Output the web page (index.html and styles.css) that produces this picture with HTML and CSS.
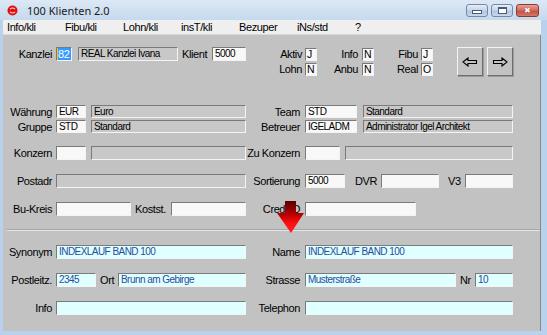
FILE: index.html
```html
<!DOCTYPE html>
<html lang="de">
<head>
    <meta charset="UTF-8">
    <title>100 Klienten 2.0</title>
    <link rel="stylesheet" href="styles.css">
</head>
<body>
<div class="window">
    <!-- Title bar -->
    <div class="titlebar">
        <svg class="app-icon" width="11" height="11" viewBox="0 0 11 11">
            <circle cx="5.5" cy="5.5" r="5" fill="#e01010"/>
            <path d="M3 4 Q5.5 2 8 4 M3 7 Q5.5 9 8 7" stroke="#ffd0d0" stroke-width="1.2" fill="none"/>
        </svg>
        <span class="title">100 Klienten 2.0</span>
        <div class="win-buttons">
            <span class="wbtn"><span class="g-min"></span></span>
            <span class="wbtn"><span class="g-max"></span></span>
            <span class="wbtn close"><span class="g-close">&#x2716;</span></span>
        </div>
    </div>

    <div class="frame">
        <!-- Menu -->
        <nav class="menubar">
            <span>Info/kli</span>
            <span>Fibu/kli</span>
            <span>Lohn/kli</span>
            <span>insT/kli</span>
            <span>Bezuper</span>
            <span>iNs/std</span>
            <span>?</span>
        </nav>

        <div class="client">
            <!-- Upper form -->
            <section class="upper">
                <div class="row row-top">
                    <span class="lab">Kanzlei</span>
                    <span class="fld sel w16"><span class="hl">82</span></span>
                    <span class="fld ro w100 ml6">REAL Kanzlei Ivana</span>
                    <span class="ilab ml4 w26">Klient</span>
                    <span class="fld w34 ml4">5000</span>

                    <div class="flags g1">
                        <div class="flag"><span class="flab">Aktiv</span><span class="fld sm">J</span></div>
                        <div class="flag"><span class="flab">Lohn</span><span class="fld sm">N</span></div>
                    </div>
                    <div class="flags g2">
                        <div class="flag"><span class="flab">Info</span><span class="fld sm">N</span></div>
                        <div class="flag"><span class="flab">Anbu</span><span class="fld sm">N</span></div>
                    </div>
                    <div class="flags g3">
                        <div class="flag"><span class="flab">Fibu</span><span class="fld sm">J</span></div>
                        <div class="flag"><span class="flab">Real</span><span class="fld sm">O</span></div>
                    </div>

                    <button class="nav-btn first">
                        <svg width="16" height="10" viewBox="0 0 16 10"><path d="M1 5 L6 1 L6 3.5 L14.5 3.5 L14.5 6.5 L6 6.5 L6 9 Z" fill="none" stroke="#000" stroke-width="1.1"/></svg>
                    </button>
                    <button class="nav-btn">
                        <svg width="16" height="10" viewBox="0 0 16 10"><path d="M15 5 L10 1 L10 3.5 L1.5 3.5 L1.5 6.5 L10 6.5 L10 9 Z" fill="none" stroke="#000" stroke-width="1.1"/></svg>
                    </button>
                </div>

                <div class="row row-pair">
                    <div class="half">
                        <div class="sub">
                            <span class="lab">Währung</span>
                            <span class="fld w30 h13">EUR</span>
                            <span class="fld ro w155 h13 ml5">Euro</span>
                        </div>
                        <div class="sub">
                            <span class="lab">Gruppe</span>
                            <span class="fld w30 h13">STD</span>
                            <span class="fld ro w155 h13 ml5">Standard</span>
                        </div>
                    </div>
                    <div class="half-r">
                        <div class="sub">
                            <span class="rlab">Team</span>
                            <span class="fld w52 h13">STD</span>
                            <span class="fld ro w150 h13 ml6">Standard</span>
                        </div>
                        <div class="sub">
                            <span class="rlab">Betreuer</span>
                            <span class="fld w52 h13">IGELADM</span>
                            <span class="fld ro w150 h13 ml6">Administrator Igel Architekt</span>
                        </div>
                    </div>
                </div>

                <div class="row">
                    <div class="half">
                        <span class="lab">Konzern</span>
                        <span class="fld w30"></span>
                        <span class="fld ro w155 ml5"></span>
                    </div>
                    <div class="half-r">
                        <span class="rlab">Zu Konzern</span>
                        <span class="fld w35"></span>
                        <span class="fld ro w168 ml5"></span>
                    </div>
                </div>

                <div class="row">
                    <div class="half">
                        <span class="lab">Postadr</span>
                        <span class="fld ro w190"></span>
                    </div>
                    <div class="half-r">
                        <span class="rlab">Sortierung</span>
                        <span class="fld w40">5000</span>
                        <span class="ilab ml10 w22">DVR</span>
                        <span class="fld w58 ml4"></span>
                        <span class="ilab ml9 w14">V3</span>
                        <span class="fld w48 ml3"></span>
                    </div>
                </div>

                <div class="row">
                    <div class="half">
                        <span class="lab">Bu-Kreis</span>
                        <span class="fld w75"></span>
                        <span class="ilab ml4 w32">Kostst.</span>
                        <span class="fld w75 ml4"></span>
                    </div>
                    <div class="half-r">
                        <span class="rlab">CreditID</span>
                        <span class="fld w111"></span>
                    </div>
                </div>
            </section>

            <div class="separator"></div>

            <!-- Lower form -->
            <section class="lower">
                <div class="row">
                    <div class="half">
                        <span class="lab">Synonym</span>
                        <span class="fld cy w190">INDEXLAUF BAND 100</span>
                    </div>
                    <div class="half-r">
                        <span class="rlab">Name</span>
                        <span class="fld cy w208">INDEXLAUF BAND 100</span>
                    </div>
                </div>
                <div class="row">
                    <div class="half">
                        <span class="lab">Postleitz.</span>
                        <span class="fld cy w40">2345</span>
                        <span class="ilab ml4 w15">Ort</span>
                        <span class="fld cy w128 ml3">Brunn am Gebirge</span>
                    </div>
                    <div class="half-r">
                        <span class="rlab">Strasse</span>
                        <span class="fld cy w151">Musterstraße</span>
                        <span class="ilab ml4 w12">Nr</span>
                        <span class="fld cy w38 ml3">10</span>
                    </div>
                </div>
                <div class="row">
                    <div class="half">
                        <span class="lab">Info</span>
                        <span class="fld cy w190"></span>
                    </div>
                    <div class="half-r">
                        <span class="rlab">Telephon</span>
                        <span class="fld cy w208"></span>
                    </div>
                </div>
            </section>

            <!-- Red pointer arrow lying over the form -->
            <svg class="red-arrow" width="28" height="33" viewBox="0 0 28 33">
                <defs>
                    <linearGradient id="ra" x1="0" y1="0" x2="0" y2="1">
                        <stop offset="0" stop-color="#5a0000"/>
                        <stop offset="0.45" stop-color="#c00000"/>
                        <stop offset="0.7" stop-color="#ff1010"/>
                        <stop offset="1" stop-color="#ff2020"/>
                    </linearGradient>
                </defs>
                <path d="M8 0 L19 0 L19 12 L27 12 L14 32 L0 12 L8 12 Z" fill="url(#ra)"/>
            </svg>
        </div>
    </div>
</div>
</body>
</html>
```

FILE: styles.css
```css
/* General */
body {
    margin: 0;
    padding: 0;
    font-family: "Liberation Sans", Arial, sans-serif;
    font-size: 11px;
    letter-spacing: -0.4px;
    color: #000;
}

.window {
    width: 547px;
    height: 335px;
    display: flex;
    flex-direction: column;
    background: #b8d1ec;
    overflow: hidden;
}

/* Title bar */
.titlebar {
    height: 20px;
    display: flex;
    align-items: center;
    background: linear-gradient(#dce8f5, #c6d9ee);
    position: relative;
}

.app-icon {
    margin-left: 7px;
}

.title {
    margin-left: 9px;
    font-family: "Noto Sans", "Liberation Sans", sans-serif;
    font-size: 11px;
    letter-spacing: 0;
    color: #1a1a1a;
}

.win-buttons {
    margin-left: auto;
    margin-right: 8px;
    display: flex;
    gap: 3px;
    align-self: flex-start;
    margin-top: 4px;
}

.wbtn {
    width: 22px;
    height: 13px;
    box-sizing: border-box;
    border: 1px solid #7489a8;
    border-radius: 3px;
    background: linear-gradient(#e6eef8, #c3d3e8 50%, #aec2de 51%, #c9d8ec);
    display: flex;
    align-items: center;
    justify-content: center;
}

.wbtn.close {
    width: 23px;
    border-color: #8a3a33;
    background: linear-gradient(#e8a196, #d0685a 50%, #c24a3b 51%, #d57a6b);
}

.g-min {
    width: 8px;
    height: 2px;
    margin-top: 3px;
    background: #fff;
    border: 1px solid #4a5a78;
}

.g-max {
    width: 7px;
    height: 4px;
    border: 1px solid #4a5a78;
    border-top-width: 2px;
    background: #fff;
}

.g-close {
    color: #fff;
    font-size: 8px;
    line-height: 8px;
    text-shadow: 0 0 1px #6a2018;
}

/* Frame around the client area */
.frame {
    flex: 1;
    display: flex;
    flex-direction: column;
    padding: 0 6px 4px 3px;
}

.menubar {
    height: 15px;
    display: flex;
    align-items: center;
    padding-left: 4px;
    background: #efefef;
    border-bottom: 1px solid #d8d8d8;
    box-sizing: border-box;
}

.menubar span {
    width: 58px;
}

.client {
    flex: 1;
    position: relative;
    background: #c2c2c2;
    border-right: 1px solid #8a8a8a;
    display: flex;
    flex-direction: column;
}

/* Rows */
.row {
    display: flex;
    align-items: flex-start;
    height: 14px;
    margin-top: 14px;
}

.upper .row-top {
    margin-top: 12px;
    height: 29px;
}

.upper .row-pair {
    margin-top: 29px;
    height: 27px;
}

.half {
    width: 244px;
    display: flex;
    flex-direction: row;
}

.half-r {
    display: flex;
}

.row-pair .half,
.row-pair .half-r {
    flex-direction: column;
    gap: 1px;
}

.sub {
    display: flex;
}

.lab {
    width: 49px;
    margin-right: 4px;
    text-align: right;
    line-height: 14px;
    white-space: nowrap;
}

.rlab {
    width: 53px;
    margin-right: 5px;
    text-align: right;
    line-height: 14px;
    white-space: nowrap;
}

.ilab {
    line-height: 14px;
    white-space: nowrap;
}

/* Fields */
.fld {
    height: 14px;
    box-sizing: border-box;
    border: 1px solid;
    border-color: #7a7a7a #f4f4f4 #f4f4f4 #7a7a7a;
    background: #f8f8f8;
    padding-left: 2px;
    font-size: 10px;
    letter-spacing: -0.55px;
    line-height: 12px;
    white-space: nowrap;
    overflow: hidden;
    display: block;
}

.fld.ro {
    background: #c8c8c8;
}

.fld.cy {
    background: #e0ffff;
    color: #2a4c9c;
}

.fld.sel {
    background: #ffc21a;
    padding-left: 1px;
    font-size: 11px;
    letter-spacing: -0.3px;
}

.fld.sel .hl {
    display: inline-block;
    background: #3399ff;
    color: #fff;
    padding-right: 1px;
}

.fld.sm {
    width: 12px;
    height: 13px;
    padding-left: 1px;
    line-height: 11px;
    font-size: 10.5px;
}

.h13 { height: 13px; line-height: 11px; }

/* Flag groups in top row */
.flags {
    display: flex;
    flex-direction: column;
    gap: 2px;
    margin-top: 1px;
}

.flag {
    display: flex;
}

.flab {
    text-align: right;
    line-height: 13px;
}

.g1 { margin-left: 24px; }
.g1 .flab { width: 32px; margin-right: 3px; }
.g2 .flab { width: 41px; margin-right: 4px; }
.g3 .flab { width: 44px; margin-right: 3px; }

.nav-btn {
    width: 26px;
    height: 29px;
    margin-left: 4px;
    padding: 0;
    background: #c2c2c2;
    border: 1px solid;
    border-color: #f4f4f4 #6e6e6e #6e6e6e #f4f4f4;
    box-shadow: 1px 1px 0 #9a9a9a;
    display: flex;
    align-items: center;
    justify-content: center;
}

.nav-btn.first {
    margin-left: 24px;
}

.separator {
    margin-top: 13px;
    margin-left: 4px;
    height: 0;
    border-top: 1px solid #a6a6a6;
    border-bottom: 1px solid #e6e6e6;
}

.lower .row:first-child {
    margin-top: 14px;
}

.red-arrow {
    position: absolute;
    left: 274px;
    top: 166px;
}

/* Widths and spacing */
.w12 { width: 12px; }
.w14 { width: 14px; }
.w15 { width: 15px; }
.w16 { width: 16px; }
.w22 { width: 22px; }
.w26 { width: 26px; }
.w30 { width: 30px; }
.w32 { width: 32px; }
.w34 { width: 34px; }
.w35 { width: 35px; }
.w38 { width: 38px; }
.w40 { width: 40px; }
.w48 { width: 48px; }
.w52 { width: 52px; }
.w58 { width: 58px; }
.w75 { width: 75px; }
.w100 { width: 100px; }
.w111 { width: 111px; }
.w128 { width: 128px; }
.w150 { width: 150px; }
.w151 { width: 151px; }
.w155 { width: 155px; }
.w168 { width: 168px; }
.w190 { width: 190px; }
.w208 { width: 208px; }

.ml3 { margin-left: 3px; }
.ml4 { margin-left: 4px; }
.ml5 { margin-left: 5px; }
.ml6 { margin-left: 6px; }
.ml9 { margin-left: 9px; }
.ml10 { margin-left: 10px; }
```
